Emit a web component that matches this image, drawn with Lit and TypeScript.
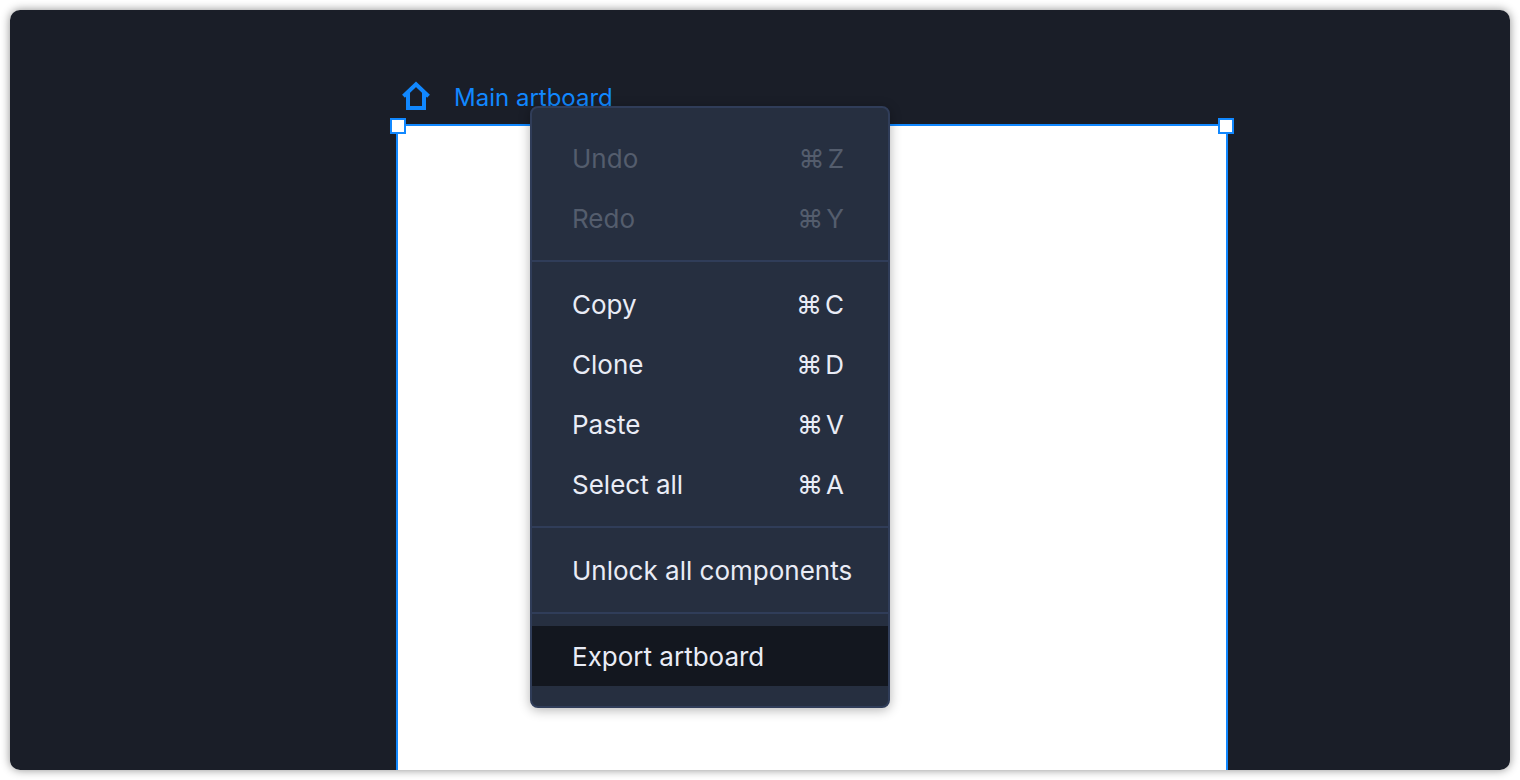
import { LitElement, html, css, nothing } from "lit";
import { customElement, state } from "lit/decorators.js";

interface MenuItem {
  label: string;
  key?: string;
  disabled?: boolean;
}

const GROUPS: MenuItem[][] = [
  [
    { label: "Undo", key: "Z", disabled: true },
    { label: "Redo", key: "Y", disabled: true },
  ],
  [
    { label: "Copy", key: "C" },
    { label: "Clone", key: "D" },
    { label: "Paste", key: "V" },
    { label: "Select all", key: "A" },
  ],
  [{ label: "Unlock all components" }],
  [{ label: "Export artboard" }],
];

@customElement("context-menu")
class ContextMenu extends LitElement {
  @state() private active = "Export artboard";

  static styles = css`
    :host {
      display: block;
      box-sizing: border-box;
      padding: 8px 0;
      background: #262f40;
      border: 2px solid #303d59;
      border-radius: 8px;
      box-shadow: 0 2px 12px rgba(0, 0, 0, 0.3);
    }
    .group {
      padding: 12px 0;
    }
    .group + .group {
      border-top: 2px solid #303d59;
    }
    .item {
      display: flex;
      align-items: center;
      justify-content: space-between;
      width: 100%;
      height: 60px;
      margin: 0;
      padding: 2px 36px 0 40px;
      border: 0;
      background: none;
      color: #e9ecf6;
      font: inherit;
      white-space: nowrap;
      text-align: left;
    }
    .item:disabled {
      color: #545d6d;
    }
    .item.active {
      background: #13171f;
    }
    .shortcut {
      display: flex;
      gap: 3px;
      padding-right: 8px;
      font: inherit;
    }
  `;

  render() {
    return GROUPS.map(
      (group) => html`<div class="group" role="group">
        ${group.map(
          (item) => html`<button
            type="button"
            role="menuitem"
            class="item ${item.label === this.active ? "active" : ""}"
            ?disabled=${item.disabled}
            @mouseenter=${() => (this.active = item.label)}
          >
            <span>${item.label}</span>
            ${item.key
              ? html`<kbd class="shortcut"><span>⌘</span><span>${item.key}</span></kbd>`
              : nothing}
          </button>`
        )}
      </div>`
    );
  }
}

@customElement("app-root")
class AppRoot extends LitElement {
  static styles = css`
    :host {
      display: flex;
      box-sizing: border-box;
      height: 100vh;
      padding: 10px;
      background: #fff;
      font: 26px/32px Inter, "Liberation Sans", sans-serif;
    }
    .frame {
      flex: 1;
      display: flex;
      border-radius: 10px;
      box-shadow: 0 0 10px rgba(0, 0, 0, 0.45);
    }
    .canvas {
      position: relative;
      flex: 1;
      overflow: hidden;
      background: #1a1e28;
      border-radius: 10px;
    }
    .title {
      position: absolute;
      left: 390px;
      top: 70px;
      display: flex;
      gap: 22px;
      color: #1188ff;
      font-size: 24px;
      line-height: 36px;
      white-space: nowrap;
    }
    .home {
      display: block;
      width: 32px;
      height: 32px;
    }
    .artboard {
      position: absolute;
      left: 386px;
      right: 282px;
      top: 114px;
      bottom: -40px;
      background: #fff;
      border: 2px solid #1188ff;
    }
    .handle {
      position: absolute;
      top: -8px;
      box-sizing: border-box;
      width: 16px;
      height: 16px;
      background: #fff;
      border: 2px solid #1188ff;
    }
    .start {
      left: -8px;
    }
    .end {
      right: -8px;
    }
    context-menu {
      position: absolute;
      left: 520px;
      top: 96px;
      width: 360px;
    }
  `;

  render() {
    return html`
      <div class="frame">
        <main class="canvas">
          <div class="title">
            <svg class="home" viewBox="0 0 32 32" aria-hidden="true">
              <path
                d="M3.5 16.3 16 4.2 28.5 16.3M8 13V28H24V13"
                fill="none"
                stroke="currentColor"
                stroke-width="4"
              />
            </svg>
            <span>Main artboard</span>
          </div>
          <div class="artboard">
            <span class="handle start"></span>
            <span class="handle end"></span>
          </div>
          <context-menu role="menu" aria-label="Artboard actions"></context-menu>
        </main>
      </div>
    `;
  }
}
